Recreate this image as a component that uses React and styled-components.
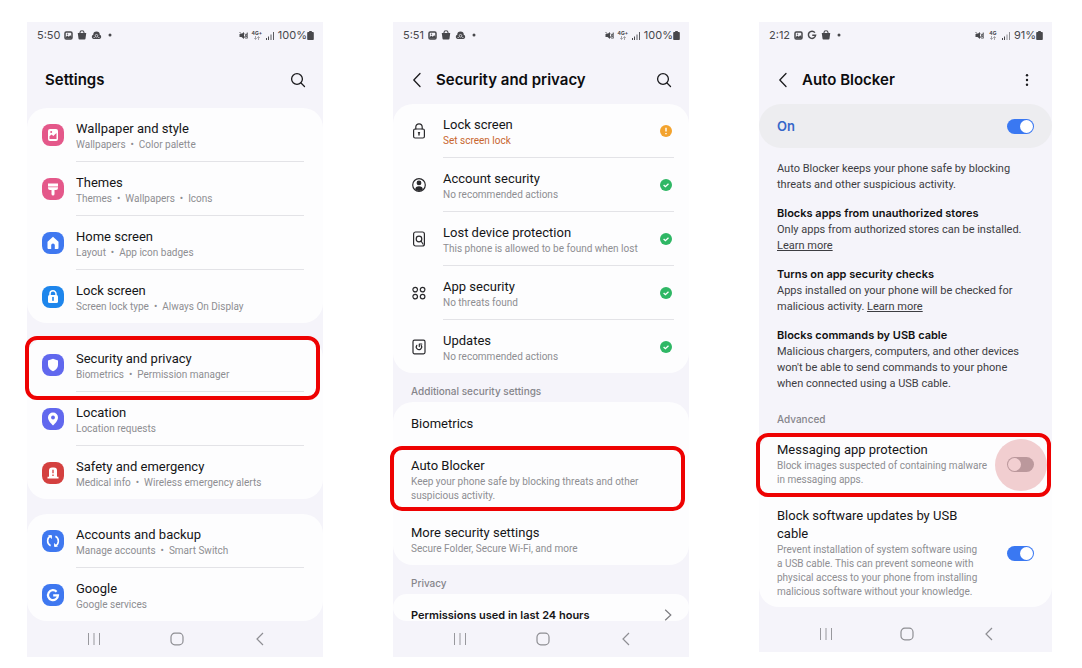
import React from 'react';
import styled, { createGlobalStyle } from 'styled-components';

const displayFont = 'Inter, Roboto, "Liberation Sans", sans-serif';

const GlobalStyle = createGlobalStyle`
  *, *::before, *::after { box-sizing: border-box; }
  body {
    margin: 0;
    background: #fff;
    color: #111;
    font-family: Roboto, Inter, "Liberation Sans", sans-serif;
    font-size: 12px;
  }
  button { font: inherit; color: inherit; background: none; border: 0; padding: 0; text-align: left; cursor: pointer; }
  ul { list-style: none; margin: 0; padding: 0; }
  h1, h2, p { margin: 0; }
  svg { display: block; flex: none; }
`;

const Page = styled.main`
  display: grid;
  grid-template-columns: 296fr 296fr 293fr;
  align-items: start;
  gap: 70px;
  padding: 22px 30px 11px 27px;
`;

const Phone = styled.section`
  display: flex;
  flex-direction: column;
  min-width: 0;
  background: #f5f4fa;
`;

const StatusRow = styled.div`
  display: flex;
  align-items: center;
  justify-content: space-between;
  height: 26px;
  padding: 0 9px 0 10px;
  color: #48484c;
  font-family: ${displayFont};
  font-size: 11px;
`;

const StatusGroup = styled.div`
  display: flex;
  align-items: center;
  gap: ${(p) => (p.$tight ? '3px' : '4px')};
`;

const Battery = styled.span`
  display: flex;
  align-items: center;
`;

const Header = styled.header`
  display: flex;
  align-items: center;
  height: 56px;
  padding: 8px 16px 0 18px;
`;

const ScreenTitle = styled.h1`
  flex: 1;
  font-family: ${displayFont};
  font-size: 15px;
  line-height: 20px;
  font-weight: 600;
  color: #0c0c0e;
  white-space: nowrap;
`;

const HeaderButton = styled.button`
  display: flex;
  align-items: center;
  height: 20px;
  width: ${(p) => (p.$back ? '25px' : '18px')};
  justify-content: ${(p) => (p.$back ? 'flex-start' : 'center')};
`;

const Cards = styled.div`
  display: flex;
  flex-direction: column;
  gap: 15px;
  padding-top: 4px;
`;

const Card = styled.ul`
  background: #fdfdfe;
  border-radius: 20px;
`;

const Item = styled.li`
  position: relative;
`;

const RowButton = styled.button`
  display: grid;
  grid-template-columns: ${(p) => p.$lead || '0'} 1fr;
  width: 100%;
  padding-right: ${(p) => p.$end || '15px'};
`;

const Lead = styled.span`
  display: flex;
  align-items: center;
  padding-left: ${(p) => p.$pad};
`;

const RowBody = styled.span`
  display: flex;
  align-items: center;
  justify-content: space-between;
  padding-right: 2px;
  border-bottom: ${(p) => (p.$line ? '1px solid #e3e3e7' : '0')};
`;

const RowText = styled.span`
  display: flex;
  flex-direction: column;
  min-width: 0;
  padding: ${(p) => (p.$list ? '12px 0 9px' : '0')};
`;

const RowTitle = styled.span`
  font-size: 13px;
  line-height: 18px;
  color: #151517;
`;

const RowSub = styled.span`
  font-size: 10px;
  line-height: 14px;
  color: ${(p) => (p.$warn ? '#c8662f' : '#8e8e92')};
  overflow-wrap: break-word;
`;

const TextButton = styled.button`
  display: flex;
  align-items: center;
  justify-content: space-between;
  width: 100%;
  padding: ${(p) => (p.$single ? '13px 17px 12px 18px' : '12px 17px 9px 18px')};
`;

const PeekButton = styled(TextButton)`
  padding: 15px 17px 0 18px;
  color: #151517;
  font-family: ${displayFont};
  font-size: 11px;
  line-height: 12px;
  font-weight: 600;
`;

const GroupLabel = styled.h2`
  padding: ${(p) => (p.$tall ? '19px 18px 6px' : '10px 18px 3px')};
  font-family: ${displayFont};
  font-size: 10px;
  line-height: 16px;
  font-weight: 500;
  color: #85858a;
`;

const Highlight = styled.span`
  position: absolute;
  z-index: 2;
  top: ${(p) => p.$top};
  bottom: ${(p) => p.$bottom};
  left: ${(p) => p.$left || '-3px'};
  right: ${(p) => p.$right};
  border: 4px solid #ee0202;
  border-radius: 12px;
  pointer-events: none;
`;

const MasterSwitch = styled.label`
  display: flex;
  align-items: center;
  justify-content: space-between;
  height: 44px;
  padding: 0 18px;
  border-radius: 22px;
  background: #ededf0;
  color: #3767c9;
  font-family: ${displayFont};
  font-size: 13px;
  font-weight: 600;
`;

const Toggle = styled.input.attrs({ type: 'checkbox', role: 'switch' })`
  appearance: none;
  flex: none;
  position: relative;
  width: 27px;
  height: 15px;
  margin: 0;
  border-radius: 8px;
  background: #9a9a9e;
  cursor: pointer;
  &::before {
    content: '';
    position: absolute;
    top: 1px;
    left: 1px;
    width: 13px;
    height: 13px;
    border-radius: 50%;
    background: #fff;
  }
  &:checked { background: #3a78f2; }
  &:checked::before { left: 13px; }
`;

const Explain = styled.div`
  display: flex;
  flex-direction: column;
  gap: 12px;
  padding: 13px 18px 0;
  font-size: 11px;
  line-height: 16px;
  color: #3d3d42;
`;

const ExplainTitle = styled.h2`
  font-family: ${displayFont};
  font-size: 11px;
  line-height: 17px;
  font-weight: 600;
  color: #111;
`;

const More = styled.a`
  color: #3d3d42;
  text-decoration: underline;
`;

const SwitchRow = styled.label`
  display: flex;
  align-items: center;
  justify-content: space-between;
  padding: ${(p) => (p.$second ? '12px' : '8px')} 18px 8px;
`;

const SwitchText = styled(RowText)`
  flex: 0 1 ${(p) => p.$basis};
`;

const Touch = styled.span`
  position: absolute;
  z-index: 1;
  top: 6px;
  right: 5px;
  width: 52px;
  height: 52px;
  border-radius: 50%;
  background: rgba(226, 150, 155, 0.46);
  pointer-events: none;
`;

const SystemNav = styled.nav`
  display: grid;
  grid-template-columns: repeat(3, 1fr);
  align-items: center;
  height: ${(p) => (p.$tall ? '45px' : '36px')};
  padding: ${(p) => (p.$tall ? '9px' : '0')} 22px 0 26px;
`;

const NavButton = styled.button`
  display: flex;
  justify-content: center;
`;

/* Status bar glyphs */
const ImageGlyph = () => (
  <svg width="9" height="9" viewBox="0 0 18 18" aria-hidden="true">
    <rect x="2" y="2" width="14" height="14" rx="2.500" fill="none" stroke="#48484c" strokeWidth="3" />
    <path d="M3 13l3.500-4 3 2.500 3-3 3 3V15H3z" fill="#48484c" />
    <circle cx="7" cy="6.300" r="1.400" fill="#48484c" />
  </svg>
);
const BagGlyph = () => (
  <svg width="10" height="10" viewBox="0 0 20 20" aria-hidden="true">
    <path d="M1.500 6h17l-1.500 11a2 2 0 0 1-2 2H5a2 2 0 0 1-2-2z" fill="#48484c" />
    <path d="M6 7V5a4 3.500 0 0 1 8 0v2" fill="none" stroke="#48484c" strokeWidth="2.200" />
  </svg>
);
const CloudGlyph = () => (
  <svg width="11" height="9" viewBox="0 0 22 18" aria-hidden="true">
    <path d="M5 16a4.500 4.500 0 0 1-.5-8.600 6.500 6.500 0 0 1 13 0A4.500 4.500 0 0 1 17 16z" fill="#48484c" />
    <circle cx="11" cy="9.500" r="2.600" fill="none" stroke="#f5f4fa" strokeWidth="1.400" />
    <path d="M5 13h3M14 13h3" fill="none" stroke="#f5f4fa" strokeWidth="1.200" />
  </svg>
);
const GGlyph = () => (
  <svg width="10" height="10" viewBox="0 0 20 20" aria-hidden="true">
    <path d="M15.800 5.200A7.200 7.200 0 1 0 17.200 10.500H10.500" fill="none" stroke="#48484c" strokeWidth="3" />
  </svg>
);
const DotGlyph = () => (
  <svg width="7" height="8" viewBox="0 0 7 8" aria-hidden="true">
    <circle cx="4" cy="4" r="1.500" fill="#48484c" />
  </svg>
);
const MuteGlyph = () => (
  <svg width="9" height="9" viewBox="0 0 18 18" aria-hidden="true">
    <path d="M1 6h4l5-4v14l-5-4H1z" fill="#48484c" />
    <path d="M11.500 5l4.500 8M16.500 3v12M11.500 13L16 5M1 2l14 14" stroke="#48484c" strokeWidth="1.700" fill="none" />
  </svg>
);
const NetLabel = styled.span`
  display: flex;
  flex-direction: column;
  align-items: center;
  width: 12px;
  font-size: 5px;
  line-height: 5px;
  font-weight: 700;
`;
const Network = ({ name }) => (
  <NetLabel>
    {name}
    <svg width="8" height="4" viewBox="0 0 16 8" aria-hidden="true">
      <path d="M5 0v6M2.500 4L5 7l2.500-3M11 8V2M8.500 4L11 1l2.500 3" fill="none" stroke="#8a8a8e" strokeWidth="1.500" />
    </svg>
  </NetLabel>
);
const SignalGlyph = ({ weak }) => (
  <svg width="9" height="9" viewBox="0 0 9 9" aria-hidden="true">
    <path d="M.5 7v2M2.500 5.500v3.500" stroke="#48484c" />
    <path d="M5 3.500v5.500M7.500 1v8" stroke={weak ? '#8e8e92' : '#5b5b60'} />
  </svg>
);
const BatteryGlyph = () => (
  <svg width="7" height="9" viewBox="0 0 7 9" aria-hidden="true">
    <path d="M2.200 0h2.600v1H6a.8.8 0 0 1 .8.800v6.400A.8.8 0 0 1 6 9H1a.8.8 0 0 1-.8-.8V1.800A.8.8 0 0 1 1 1h1.200z" fill="#48484c" />
  </svg>
);

const StatusBar = ({ time, level, network, google }) => (
  <StatusRow>
    <StatusGroup>
      <span>{time}</span>
      <ImageGlyph />
      {google ? <GGlyph /> : <BagGlyph />}
      {google ? <BagGlyph /> : <CloudGlyph />}
      <DotGlyph />
    </StatusGroup>
    <StatusGroup $tight>
      <MuteGlyph />
      <Network name={network} />
      <SignalGlyph weak={google} />
      <Battery>
        {level}
        <BatteryGlyph />
      </Battery>
    </StatusGroup>
  </StatusRow>
);

/* Header icons */
const SearchIcon = () => (
  <svg width="16" height="16" viewBox="0 0 16 16" fill="none" stroke="#1b1b1e" strokeWidth="1.300" strokeLinecap="round" aria-hidden="true">
    <circle cx="7" cy="7" r="5.400" />
    <path d="M11 11l3.500 3.500" />
  </svg>
);
const BackIcon = () => (
  <svg width="14" height="16" viewBox="0 0 14 16" fill="none" stroke="#1b1b1e" strokeWidth="1.300" strokeLinecap="round" strokeLinejoin="round" aria-hidden="true">
    <path d="M9 1.500L2.800 8 9 14.500" />
  </svg>
);
const DotsIcon = () => (
  <svg width="4" height="14" viewBox="0 0 4 14" fill="#1b1b1e" aria-hidden="true">
    <circle cx="2" cy="2.300" r="1.200" />
    <circle cx="2" cy="7" r="1.200" />
    <circle cx="2" cy="11.700" r="1.200" />
  </svg>
);

/* Coloured settings icons */
const Tile = ({ color, children }) => (
  <svg width="22" height="22" viewBox="0 0 22 22" aria-hidden="true">
    <rect width="22" height="22" rx="8" fill={color} />
    {children}
  </svg>
);
const tiles = {
  wallpaper: (
    <Tile color="#e4588a">
      <rect x="6" y="5" width="10" height="12" rx="2" fill="#fff" />
      <path d="M7.500 15v-2.800l2-1.600 1.800 1.400 3.200-3V15z" fill="#e4588a" />
      <circle cx="9.200" cy="8" r="1" fill="#e4588a" />
    </Tile>
  ),
  themes: (
    <Tile color="#e4588a">
      <path d="M6 5.500h10v3H6zM6 9.300h10v.7a2 2 0 0 1-2 2h-1.500v4a1.500 1.500 0 0 1-3 0v-4H8a2 2 0 0 1-2-2z" fill="#fff" />
    </Tile>
  ),
  home: (
    <Tile color="#3f78f0">
      <path d="M11 4.800l5.500 4.900v6.200a1 1 0 0 1-1 1h-2.700v-3.600a1.800 1.800 0 0 0-3.600 0v3.600H6.500a1 1 0 0 1-1-1V9.700z" fill="#fff" />
    </Tile>
  ),
  lock: (
    <Tile color="#1e86ec">
      <path d="M8 9.500V7.800a3 3 0 0 1 6 0v1.700" fill="none" stroke="#fff" strokeWidth="1.500" />
      <rect x="6" y="9" width="10" height="8" rx="1.500" fill="#fff" />
      <path d="M11 11.500v2.800" stroke="#1e86ec" strokeWidth="1.600" strokeLinecap="round" />
    </Tile>
  ),
  shield: (
    <Tile color="#6168ee">
      <path d="M11 4.800l5 1.700v4.500c0 3-2.200 5-5 6.200-2.800-1.200-5-3.200-5-6.200V6.500z" fill="#fff" />
    </Tile>
  ),
  pin: (
    <Tile color="#6168ee">
      <path d="M11 4.500a5 5 0 0 1 5 5c0 3-3 6-5 8-2-2-5-5-5-8a5 5 0 0 1 5-5z" fill="#fff" />
      <circle cx="11" cy="9.500" r="1.900" fill="#6168ee" />
    </Tile>
  ),
  alarm: (
    <Tile color="#d4403f">
      <path d="M7 15V8.500a3 3 0 0 1 3-3h2a3 3 0 0 1 3 3V15zM5.500 14.700h11v1.800h-11z" fill="#fff" />
      <path d="M11 7.800v3.500M11 12.600v1.300" stroke="#d4403f" strokeWidth="1.300" />
    </Tile>
  ),
  sync: (
    <Tile color="#3f78f0">
      <path d="M9.200 5.800a5.400 5.400 0 0 0-.6 9.900M12.800 16.200a5.400 5.400 0 0 0 .6-9.900" fill="none" stroke="#fff" strokeWidth="1.600" />
      <path d="M6 5.200h3.900v3.700zM16 16.800h-3.900v-3.700z" fill="#fff" />
    </Tile>
  ),
  google: (
    <Tile color="#3f78f0">
      <path d="M14.600 7.700A5 5 0 1 0 16 11.300h-4.800" fill="none" stroke="#fff" strokeWidth="2.200" />
    </Tile>
  ),
};

/* Outline icons of the security list */
const Line = ({ children }) => (
  <svg width="16" height="16" viewBox="0 0 16 16" fill="none" stroke="#29292c" strokeWidth="1.200" strokeLinecap="round" strokeLinejoin="round" aria-hidden="true">
    {children}
  </svg>
);
const outlines = {
  lock: (
    <Line>
      <path d="M4.800 6V4a3.200 3.200 0 0 1 6.400 0v2" />
      <rect x="2.600" y="6" width="10.800" height="9" rx="1.500" />
      <path d="M8 10v2M7.500 9.800h1" strokeWidth="1.400" />
    </Line>
  ),
  account: (
    <Line>
      <circle cx="8" cy="8" r="6.300" />
      <circle cx="8" cy="5.900" r="1.800" fill="#29292c" />
      <path d="M4.200 12.200c0-2 1.600-3 3.800-3s3.800 1 3.800 3c-1 1.200-2.300 1.700-3.800 1.700s-2.800-.5-3.800-1.700z" fill="#29292c" stroke="none" />
    </Line>
  ),
  device: (
    <Line>
      <rect x="2.600" y="1" width="10.800" height="14" rx="2" />
      <circle cx="8" cy="8" r="2.800" />
      <path d="M10 10l2 3" />
    </Line>
  ),
  apps: (
    <Line>
      <circle cx="4.200" cy="4.600" r="2.300" />
      <circle cx="11.600" cy="4.600" r="2.300" />
      <circle cx="4.200" cy="11.600" r="2.300" />
      <circle cx="11.600" cy="11.600" r="2.300" />
    </Line>
  ),
  updates: (
    <Line>
      <rect x="2" y="1.200" width="12" height="13.600" rx="1.500" />
      <path d="M5.800 6.300a2.700 2.700 0 1 0 4.400.1M10.800 5H8.300v2.600" />
    </Line>
  ),
};

const OkBadge = () => (
  <svg width="12" height="12" viewBox="0 0 12 12" role="img" aria-label="OK">
    <circle cx="6" cy="6" r="6" fill="#2fb765" />
    <path d="M3.600 6l1.800 1.700 3.100-3" fill="none" stroke="#fff" strokeWidth="1.300" />
  </svg>
);
const WarnBadge = () => (
  <svg width="12" height="12" viewBox="0 0 12 12" role="img" aria-label="Attention">
    <circle cx="6" cy="6" r="6" fill="#f3a32e" />
    <path d="M6 2.700v3.900M6 7.900v1.400" stroke="#fff" strokeWidth="1.400" />
  </svg>
);

const Chevron = () => (
  <svg width="8" height="12" viewBox="0 0 8 12" fill="none" stroke="#7c7c80" strokeWidth="1.200" aria-hidden="true">
    <path d="M1.200 .8L6.800 6l-5.600 5.200" />
  </svg>
);

const BottomNav = ({ tall }) => (
  <SystemNav $tall={tall} aria-label="System navigation">
    <NavButton type="button" aria-label="Recent apps">
      <svg width="14" height="14" viewBox="0 0 14 14" stroke="#98989d" aria-hidden="true">
        <path d="M1.500 1v12M7 1v12M12.500 1v12" />
      </svg>
    </NavButton>
    <NavButton type="button" aria-label="Home">
      <svg width="14" height="14" viewBox="0 0 14 14" fill="none" stroke="#8e8e93" strokeWidth="1.200" aria-hidden="true">
        <rect x="1" y="1.200" width="12" height="11.600" rx="3.800" />
      </svg>
    </NavButton>
    <NavButton type="button" aria-label="Back">
      <svg width="14" height="14" viewBox="0 0 14 14" fill="none" stroke="#8e8e93" strokeWidth="1.200" aria-hidden="true">
        <path d="M10 1L4 7l6 6" />
      </svg>
    </NavButton>
  </SystemNav>
);

/* Subtitle parts are joined by a bullet with a wide space on each side */
const bullets = (parts) => parts.join('\u00a0 • \u00a0');

const settings = [
  [
    { icon: 'wallpaper', title: 'Wallpaper and style', sub: ['Wallpapers', 'Color palette'] },
    { icon: 'themes', title: 'Themes', sub: ['Themes', 'Wallpapers', 'Icons'] },
    { icon: 'home', title: 'Home screen', sub: ['Layout', 'App icon badges'] },
    { icon: 'lock', title: 'Lock screen', sub: ['Screen lock type', 'Always On Display'] },
  ],
  [
    { icon: 'shield', title: 'Security and privacy', sub: ['Biometrics', 'Permission manager'], marked: true },
    { icon: 'pin', title: 'Location', sub: ['Location requests'] },
    { icon: 'alarm', title: 'Safety and emergency', sub: ['Medical info', 'Wireless emergency alerts'] },
  ],
  [
    { icon: 'sync', title: 'Accounts and backup', sub: ['Manage accounts', 'Smart Switch'] },
    { icon: 'google', title: 'Google', sub: ['Google services'] },
  ],
];

const security = [
  { icon: 'lock', title: 'Lock screen', sub: 'Set screen lock', warn: true },
  { icon: 'account', title: 'Account security', sub: 'No recommended actions' },
  { icon: 'device', title: 'Lost device protection', sub: 'This phone is allowed to be found when lost' },
  { icon: 'apps', title: 'App security', sub: 'No threats found' },
  { icon: 'updates', title: 'Updates', sub: 'No recommended actions' },
];

const SettingsScreen = () => (
  <Phone>
    <StatusBar time="5:50" level="100%" network="4G+" />
    <Header>
      <ScreenTitle>Settings</ScreenTitle>
      <HeaderButton type="button" aria-label="Search"><SearchIcon /></HeaderButton>
    </Header>
    <Cards>
      {settings.map((group) => (
        <Card key={group[0].title}>
          {group.map((row, i) => (
            <Item key={row.title}>
              <RowButton type="button" $lead="49px" $end="19px">
                <Lead $pad="15px">{tiles[row.icon]}</Lead>
                <RowBody $line={i < group.length - 1}>
                  <RowText $list>
                    <RowTitle>{row.title}</RowTitle>
                    <RowSub>{bullets(row.sub)}</RowSub>
                  </RowText>
                </RowBody>
              </RowButton>
              {row.marked && <Highlight $top="-2px" $bottom="-8px" $left="-2px" $right="3px" />}
            </Item>
          ))}
        </Card>
      ))}
    </Cards>
    <BottomNav />
  </Phone>
);

const SecurityScreen = () => (
  <Phone>
    <StatusBar time="5:51" level="100%" network="4G+" />
    <Header>
      <HeaderButton type="button" $back aria-label="Back"><BackIcon /></HeaderButton>
      <ScreenTitle>Security and privacy</ScreenTitle>
      <HeaderButton type="button" aria-label="Search"><SearchIcon /></HeaderButton>
    </Header>
    <Card>
      {security.map((row, i) => (
        <Item key={row.title}>
          <RowButton type="button" $lead="50px">
            <Lead $pad="18px">{outlines[row.icon]}</Lead>
            <RowBody $line={i < security.length - 1}>
              <RowText $list>
                <RowTitle>{row.title}</RowTitle>
                <RowSub $warn={row.warn}>{row.sub}</RowSub>
              </RowText>
              {row.warn ? <WarnBadge /> : <OkBadge />}
            </RowBody>
          </RowButton>
        </Item>
      ))}
    </Card>
    <GroupLabel>Additional security settings</GroupLabel>
    <Card>
      <Item>
        <TextButton type="button" $single><RowTitle>Biometrics</RowTitle></TextButton>
      </Item>
      <Item>
        <TextButton type="button">
          <RowText>
            <RowTitle>Auto Blocker</RowTitle>
            <RowSub>Keep your phone safe by blocking threats and other suspicious activity.</RowSub>
          </RowText>
        </TextButton>
        <Highlight $top="1px" $bottom="1px" $right="4px" />
      </Item>
      <Item>
        <TextButton type="button">
          <RowText>
            <RowTitle>More security settings</RowTitle>
            <RowSub>Secure Folder, Secure Wi-Fi, and more</RowSub>
          </RowText>
        </TextButton>
      </Item>
    </Card>
    <GroupLabel>Privacy</GroupLabel>
    <Card>
      <Item>
        <PeekButton type="button">
          Permissions used in last 24 hours
          <Chevron />
        </PeekButton>
      </Item>
    </Card>
    <BottomNav />
  </Phone>
);

const BlockerScreen = () => (
  <Phone>
    <StatusBar time="2:12" level="91%" network="4G" google />
    <Header>
      <HeaderButton type="button" $back aria-label="Back"><BackIcon /></HeaderButton>
      <ScreenTitle>Auto Blocker</ScreenTitle>
      <HeaderButton type="button" aria-label="More options"><DotsIcon /></HeaderButton>
    </Header>
    <MasterSwitch htmlFor="blocker-on">
      On
      <Toggle id="blocker-on" defaultChecked />
    </MasterSwitch>
    <Explain>
      <p>Auto Blocker keeps your phone safe by blocking threats and other suspicious activity.</p>
      <div>
        <ExplainTitle>Blocks apps from unauthorized stores</ExplainTitle>
        <p>Only apps from authorized stores can be installed. <More href="#stores">Learn more</More></p>
      </div>
      <div>
        <ExplainTitle>Turns on app security checks</ExplainTitle>
        <p>Apps installed on your phone will be checked for malicious activity. <More href="#checks">Learn more</More></p>
      </div>
      <div>
        <ExplainTitle>Blocks commands by USB cable</ExplainTitle>
        <p>Malicious chargers, computers, and other devices won't be able to send commands to your phone when connected using a USB cable.</p>
      </div>
    </Explain>
    <GroupLabel $tall>Advanced</GroupLabel>
    <Card>
      <Item>
        <SwitchRow htmlFor="messaging">
          <SwitchText $basis="215px">
            <RowTitle>Messaging app protection</RowTitle>
            <RowSub>Block images suspected of containing malware in messaging apps.</RowSub>
          </SwitchText>
          <Toggle id="messaging" />
        </SwitchRow>
        <Touch />
        <Highlight $top="0" $bottom="-2px" $right="1px" />
      </Item>
      <Item>
        <SwitchRow htmlFor="usb-updates" $second>
          <SwitchText $basis="208px">
            <RowTitle>Block software updates by USB cable</RowTitle>
            <RowSub>Prevent installation of system software using a USB cable. This can prevent someone with physical access to your phone from installing malicious software without your knowledge.</RowSub>
          </SwitchText>
          <Toggle id="usb-updates" defaultChecked />
        </SwitchRow>
      </Item>
    </Card>
    <BottomNav tall />
  </Phone>
);

export default function App() {
  return (
    <>
      <GlobalStyle />
      <Page>
        <SettingsScreen />
        <SecurityScreen />
        <BlockerScreen />
      </Page>
    </>
  );
}
